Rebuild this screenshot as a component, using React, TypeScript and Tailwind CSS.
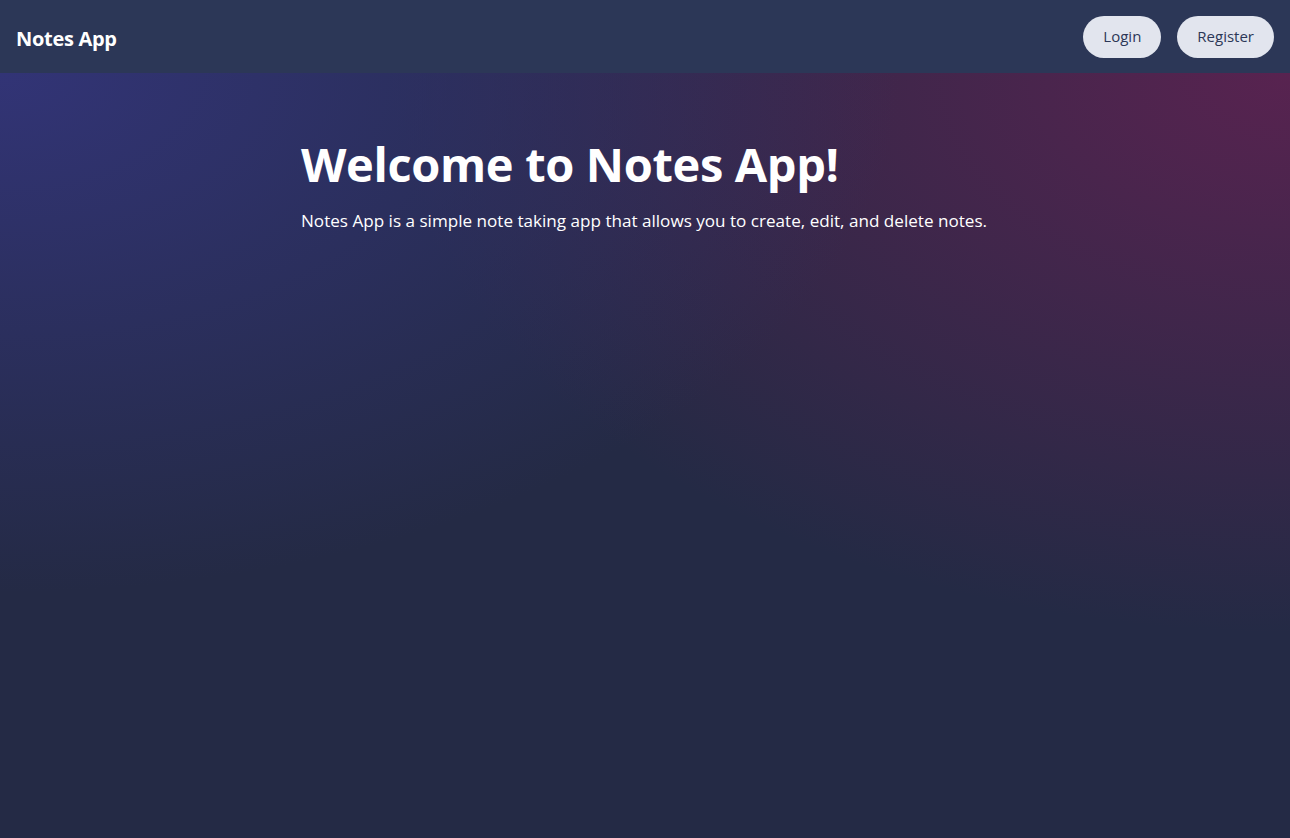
export default function App() {
  return (
    <div
      className="min-h-screen h-[838px] flex flex-col bg-[#242a45] text-white"
      style={{ fontFamily: '"Open Sans", "Noto Sans", "Liberation Sans", sans-serif' }}
    >
      <header className="h-[73px] shrink-0 flex items-center justify-between pl-4 pr-4 bg-[#2c3757]">
        <div className="mt-1 text-[20px] font-bold tracking-[-0.3px]">Notes App</div>
        <nav className="flex items-center gap-4">
          <button className="h-[42px] px-5 rounded-full bg-[#e2e5ee] text-[#2c3757] text-[15px]">Login</button>
          <button className="h-[42px] px-5 rounded-full bg-[#e2e5ee] text-[#2c3757] text-[15px]">Register</button>
        </nav>
      </header>
      <main className="flex-1 bg-[radial-gradient(ellipse_900px_520px_at_0%_0%,rgba(50,52,118,1)_0%,rgba(50,52,118,0)_100%),radial-gradient(ellipse_900px_560px_at_100%_0%,rgba(88,35,80,1)_0%,rgba(88,35,80,0)_100%)]">
        <div className="max-w-3xl mx-auto px-10 pt-[63px]">
          <h1 className="text-[47px] font-bold leading-[1.2] tracking-[-0.35px]">Welcome to Notes App!</h1>
          <p className="mt-[17px] text-[17.1px] leading-6">
            Notes App is a simple note taking app that allows you to create, edit, and delete notes.
          </p>
        </div>
      </main>
    </div>
  );
}
